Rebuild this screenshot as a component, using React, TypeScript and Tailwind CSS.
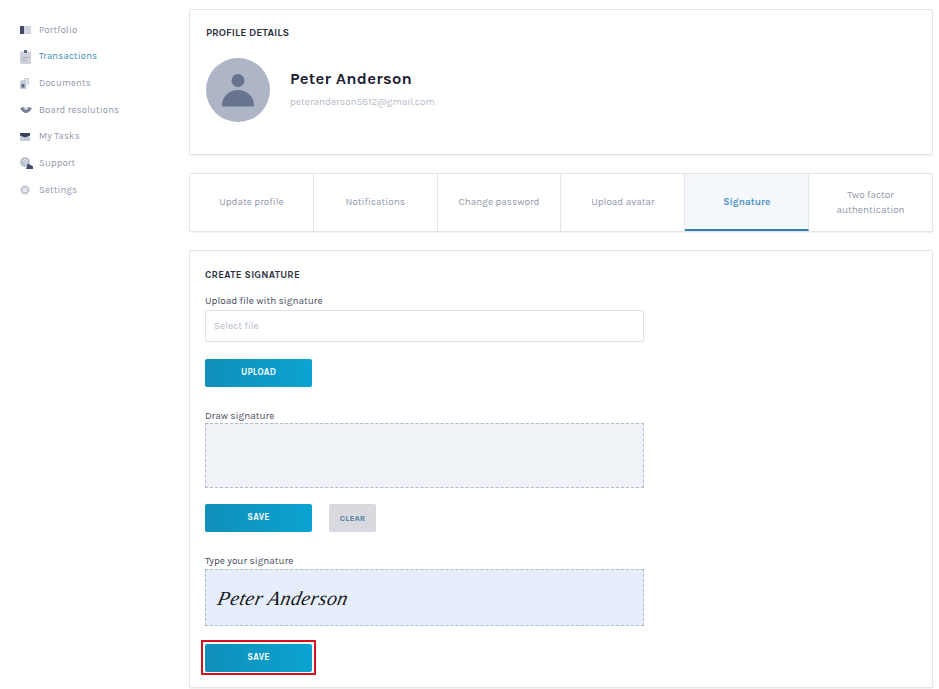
const font = "font-['Karla','Lato','Noto_Sans',sans-serif]";

const navItems = [
  { label: "Portfolio", icon: <PortfolioIcon /> },
  { label: "Transactions", icon: <TransactionsIcon />, active: true },
  { label: "Documents", icon: <DocumentsIcon /> },
  { label: "Board resolutions", icon: <BoardIcon /> },
  { label: "My Tasks", icon: <TasksIcon /> },
  { label: "Support", icon: <SupportIcon /> },
  { label: "Settings", icon: <SettingsIcon /> },
];

const tabs = ["Update profile", "Notifications", "Change password", "Upload avatar", "Signature", "Two factor authentication"];

function PortfolioIcon() {
  return (
    <svg width="11" height="8" viewBox="0 0 11 8">
      <rect x="0" y="0" width="4" height="8" rx="0.5" fill="#3f4a68" />
      <rect x="4" y="0" width="7" height="8" rx="0.5" fill="#cfd4df" />
    </svg>
  );
}

function TransactionsIcon() {
  return (
    <svg width="11" height="14" viewBox="0 0 11 14">
      <rect x="0" y="1.5" width="11" height="12.5" rx="1" fill="#cdd2dd" />
      <rect x="4" y="0" width="3" height="3" fill="#5f6b85" />
      <rect x="2.5" y="7" width="6" height="1" fill="#a4acbc" />
      <rect x="2.5" y="9.5" width="4" height="1" fill="#a4acbc" />
    </svg>
  );
}

function DocumentsIcon() {
  return (
    <svg width="9" height="11" viewBox="0 0 9 11">
      <path d="M4 0h4a1 1 0 0 1 1 1v6H7.500V1.500H4z" fill="#c6ccd8" />
      <path d="M0 4l2-2h4.500v9H0z" fill="#c6ccd8" />
      <rect x="1.500" y="6" width="3" height="3.500" fill="#5f6b85" />
    </svg>
  );
}

function BoardIcon() {
  return (
    <svg width="12" height="7" viewBox="0 0 12 7">
      <path d="M0 2.500L3 1l3 1 3-1 3 1.500L10 5 7 7H5L2 5z" fill="#76819a" />
      <path d="M3.500 2.500L6 1.500l2.500 1L6 4z" fill="#dfe2ea" />
    </svg>
  );
}

function TasksIcon() {
  return (
    <svg width="10" height="8" viewBox="0 0 10 8">
      <rect x="0" y="0" width="10" height="8" rx="0.5" fill="#c6ccd8" />
      <path d="M0 0h10v2.500L5 4.500 0 2.500z" fill="#39435f" />
    </svg>
  );
}

function SupportIcon() {
  return (
    <svg width="13" height="12" viewBox="0 0 13 12">
      <circle cx="5" cy="5" r="5" fill="#bcc3d0" />
      <path d="M3.500 4a1.500 1.500 0 1 1 2 1.400V6.500" stroke="#f4f5f8" strokeWidth="0.9" fill="none" />
      <path d="M6 12l2-5.500L13 9.500V12z" fill="#3f4a68" />
    </svg>
  );
}

function SettingsIcon() {
  return (
    <svg width="10" height="10" viewBox="0 0 10 10">
      <circle cx="5" cy="5" r="3.100" fill="none" stroke="#c2c8d4" strokeWidth="2" />
      <circle cx="5" cy="5" r="4.400" fill="none" stroke="#c2c8d4" strokeWidth="1.200" strokeDasharray="1.700 1.750" />
      <circle cx="5" cy="5" r="1.500" fill="#dfe2ea" />
    </svg>
  );
}

function Avatar() {
  return (
    <div className="flex h-16 w-16 shrink-0 items-center justify-center rounded-full bg-[#adb5c6]">
      <svg width="32" height="33" viewBox="0 0 32 33">
        <circle cx="16" cy="6.500" r="6.500" fill="#67738f" />
        <path d="M0 32.500v-1.500a16 15 0 0 1 32 0v1.500z" fill="#67738f" />
      </svg>
    </div>
  );
}

function BlueButton({ children, className = "" }: { children: string; className?: string }) {
  return (
    <button className={`h-7 w-[107px] rounded-[2px] bg-gradient-to-r from-[#0f8fb9] to-[#0ba3d2] text-[9px] font-bold tracking-[0.2px] text-white ${className}`}>
      {children}
    </button>
  );
}

export default function App() {
  return (
    <div className={`flex h-[689px] w-[939px] overflow-hidden bg-white ${font}`}>
      <nav className="w-[189px] shrink-0 pl-5 pt-[16.5px]">
        {navItems.map((item) => (
          <div key={item.label} className="flex h-[26.7px] items-center">
            <span className="flex w-[19px] justify-start">{item.icon}</span>
            <span className={`text-[9.5px] tracking-[0.2px] ${item.active ? "text-[#3b8db5]" : "text-[#8f98aa]"}`}>
              {item.label}
            </span>
          </div>
        ))}
      </nav>

      <main className="w-[744px] pt-[9px]">
        <section className="h-[146px] rounded-[2px] border border-[#e3e4e8] px-4 pt-[17px] shadow-[0_1px_1px_rgba(0,0,0,0.06)]">
          <h2 className="text-[10.5px] font-bold leading-3 text-[#2b3040]">PROFILE DETAILS</h2>
          <div className="mt-[19px] flex">
            <Avatar />
            <div className="ml-5 pt-[11px]">
              <div className="text-[16.5px] font-bold leading-5 tracking-[0.25px] text-[#1c2133]">Peter Anderson</div>
              <div className="mt-[7px] text-[10px] leading-3 text-[#b4bbc9]">peteranderson5812@gmail.com</div>
            </div>
          </div>
        </section>

        <div className="mt-[18px] flex h-[59px] rounded-[2px] border border-[#e3e4e8] shadow-[0_1px_1px_rgba(0,0,0,0.06)]">
          {tabs.map((tab) => {
            const active = tab === "Signature";
            return (
              <div
                key={tab}
                className={`flex flex-1 items-center justify-center border-r border-[#e3e4e8] px-[18px] text-center text-[10px] leading-[14.5px] last:border-r-0 ${
                  active ? "border-b-2 border-b-[#2c7fb5] bg-[#f5f9fd] pt-[2px] font-bold text-[#4a93c4]" : "text-[#8f98aa]"
                }`}
              >
                {tab}
              </div>
            );
          })}
        </div>

        <section className="mt-[18px] h-[438px] rounded-[2px] border border-[#e3e4e8] pl-[15px] pt-[18px] shadow-[0_1px_1px_rgba(0,0,0,0.06)]">
          <h2 className="text-[10px] font-bold leading-3 tracking-[0.2px] text-[#2b3040]">CREATE SIGNATURE</h2>

          <label className="mt-[14px] block text-[10px] leading-3 text-[#454b5c]">Upload file with signature</label>
          <div className="mt-[3px] flex h-[32px] w-[439px] items-center rounded-[2px] border border-[#dfe1e6] px-2 text-[10px] text-[#b4bbc9]">
            Select file
          </div>
          <BlueButton className="mt-[17px] block">UPLOAD</BlueButton>

          <label className="mt-[23px] block text-[10px] leading-3 text-[#454b5c]">Draw signature</label>
          <div className="mt-px h-[65px] w-[439px] border border-dashed border-[#b4bac8] bg-[#eff2f7]" />
          <div className="mt-4 flex gap-[17px]">
            <BlueButton>SAVE</BlueButton>
            <button className="h-7 w-[47px] rounded-[2px] bg-[#d8dae0] text-[8.5px] font-bold text-[#4f7da0]">CLEAR</button>
          </div>

          <label className="mt-[23px] block text-[10px] leading-3 text-[#454b5c]">Type your signature</label>
          <div className="mt-[2px] flex h-[57px] w-[439px] items-center border border-dashed border-[#b4bac8] bg-[#e6eefb] pl-3">
            <span className="-skew-x-12 font-['Liberation_Serif',serif] text-[20px] italic tracking-[0.4px] text-[#1a1a1a]">Peter Anderson</span>
          </div>
          <div className="-ml-1 mt-[14px] w-[115px] border-2 border-[#d4121f] px-[2px] py-[1.5px]">
            <BlueButton className="block">SAVE</BlueButton>
          </div>
        </section>
      </main>
    </div>
  );
}
